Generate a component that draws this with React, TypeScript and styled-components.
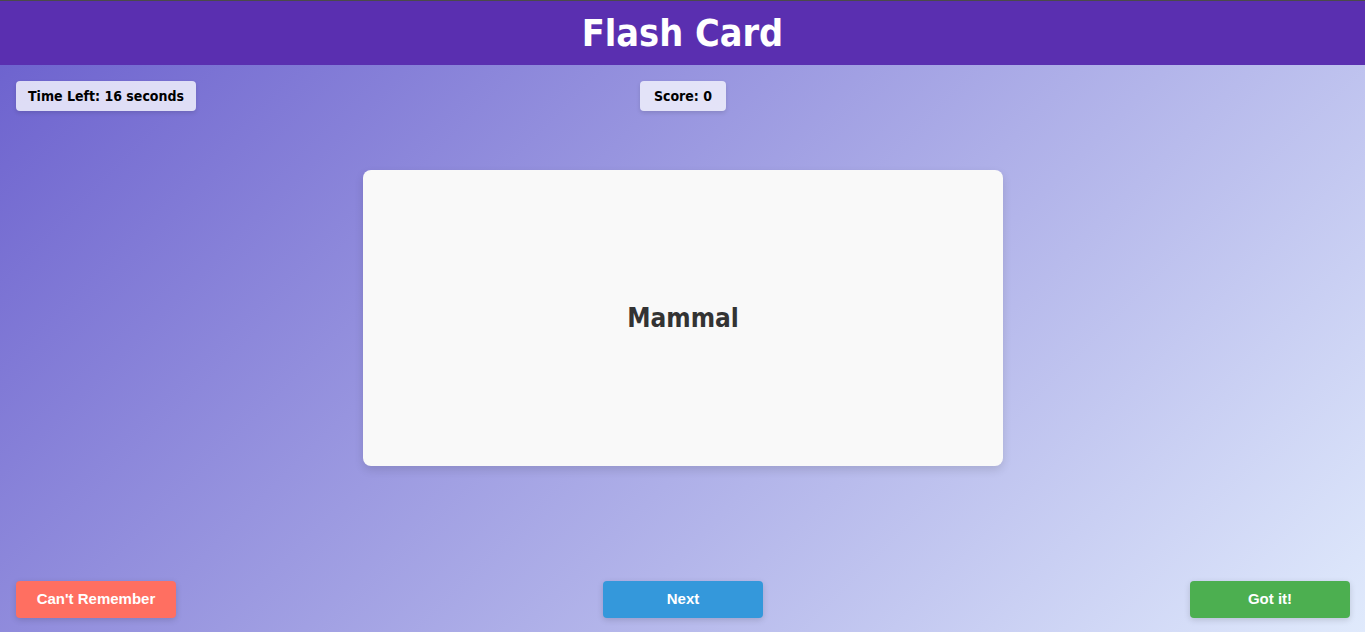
import React from "react";
import styled, { createGlobalStyle } from "styled-components";

const Global = createGlobalStyle`
  html, body { margin: 0; padding: 0; }
  body { font-family: "DejaVu Sans Condensed", "DejaVu Sans", sans-serif; }
  * { box-sizing: border-box; }
`;

const Page = styled.div`
  height: 632px;
  display: flex;
  flex-direction: column;
  background: linear-gradient(135deg, #6a5fcd 0%, #e0eafc 100%);
  overflow: hidden;
`;

const Header = styled.header`
  height: 65px;
  flex: none;
  background: #5a2fb0;
  border-top: 1px solid #4a4a4a;
  display: flex;
  align-items: center;
  justify-content: center;
`;

const Title = styled.h1`
  margin: 0;
  color: #ffffff;
  font-family: "DejaVu Sans Condensed", "DejaVu Sans", sans-serif;
  font-weight: bold;
  font-size: 37.5px;
  line-height: 1;
  padding-top: 2px;
`;

const Main = styled.main`
  flex: 1;
  display: flex;
  flex-direction: column;
  padding: 16px 15px 14px 16px;
`;

const StatsRow = styled.div`
  display: grid;
  grid-template-columns: 1fr auto 1fr;
  align-items: start;
`;

const Badge = styled.div<{ $tone?: "time" | "score" }>`
  justify-self: ${(p) => (p.$tone === "score" ? "center" : "start")};
  height: 30px;
  padding: 0 ${(p) => (p.$tone === "score" ? "14px" : "12px")};
  display: flex;
  align-items: center;
  border-radius: 4px;
  background: rgba(240, 240, 252, 0.86);
  box-shadow: 0 2px 4px rgba(0, 0, 0, 0.12);
  font-family: "DejaVu Sans Condensed", "DejaVu Sans", sans-serif;
  font-weight: bold;
  font-size: 14px;
  color: #000;
`;

const CardArea = styled.div`
  flex: 1;
  display: flex;
  justify-content: center;
  align-items: flex-start;
  padding-top: 59px;
`;

const Card = styled.div`
  width: 640px;
  height: 296px;
  background: #f9f9f9;
  border-radius: 8px;
  box-shadow: 0 4px 10px rgba(0, 0, 0, 0.12);
  display: flex;
  align-items: center;
  justify-content: center;
`;

const Word = styled.h2`
  margin: 0;
  color: #333;
  font-family: "DejaVu Sans Condensed", "DejaVu Sans", sans-serif;
  font-weight: bold;
  font-size: 26px;
`;

const ButtonRow = styled.div`
  display: flex;
  justify-content: space-between;
  align-items: center;
`;

const Button = styled.button<{ $color: string }>`
  width: 160px;
  height: 37px;
  padding: 0 0 2px;
  border: none;
  border-radius: 4px;
  background: ${(p) => p.$color};
  color: #fff;
  font-family: "Liberation Sans", Arial, sans-serif;
  font-weight: bold;
  font-size: 15px;
  cursor: pointer;
  box-shadow: 0 2px 6px rgba(0, 0, 0, 0.15);
`;

export default function App() {
  return (
    <Page>
      <Global />
      <Header>
        <Title>Flash Card</Title>
      </Header>
      <Main>
        <StatsRow>
          <Badge $tone="time">Time Left: 16 seconds</Badge>
          <Badge $tone="score">Score: 0</Badge>
          <div />
        </StatsRow>
        <CardArea>
          <Card>
            <Word>Mammal</Word>
          </Card>
        </CardArea>
        <ButtonRow>
          <Button $color="#ff6f61">Can't Remember</Button>
          <Button $color="#3498db">Next</Button>
          <Button $color="#4caf50">Got it!</Button>
        </ButtonRow>
      </Main>
    </Page>
  );
}
